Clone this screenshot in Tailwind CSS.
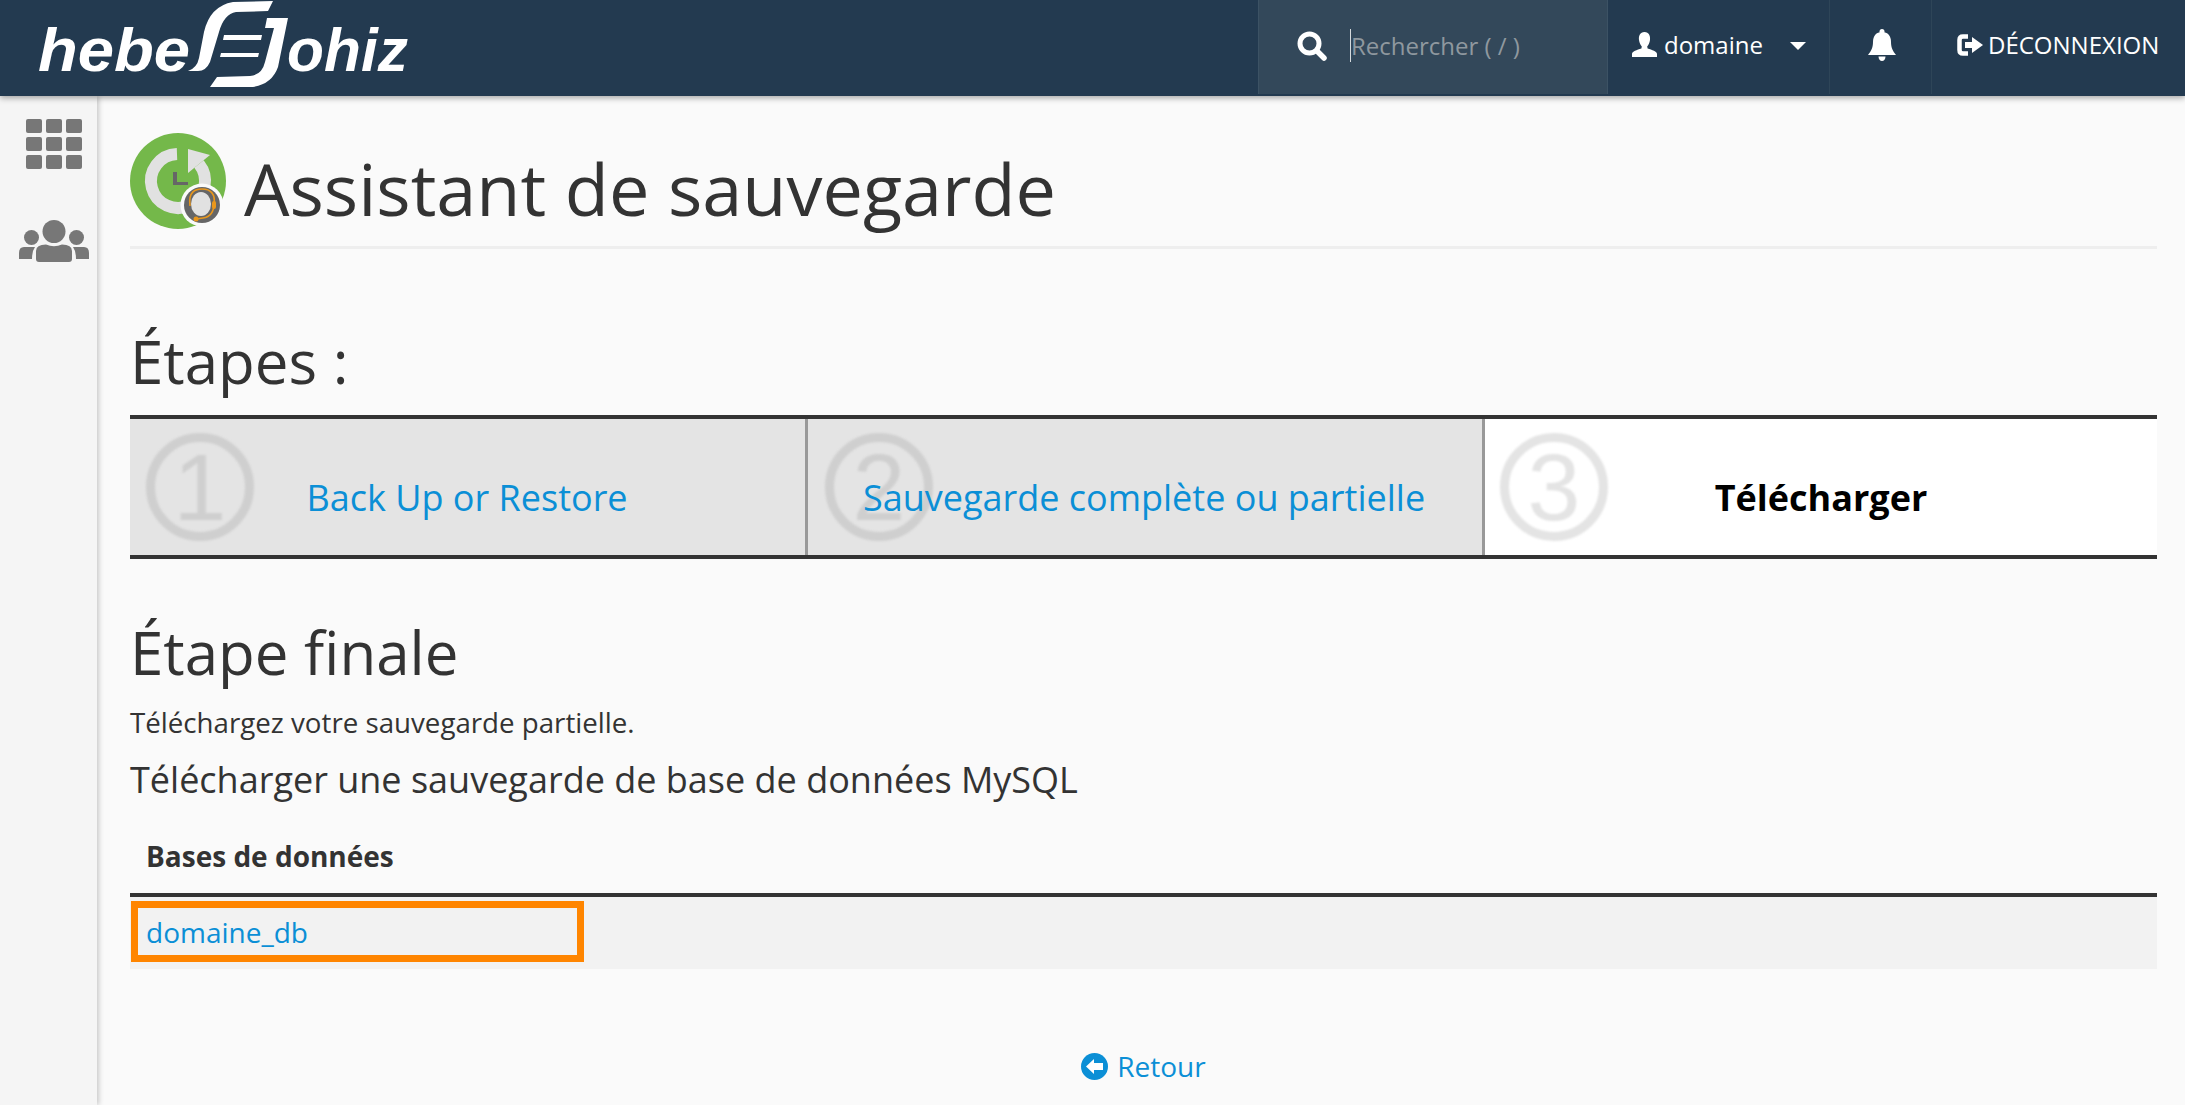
<!DOCTYPE html>
<html lang="fr">

<head>
  <meta charset="UTF-8">
  <meta name="viewport" content="width=device-width, initial-scale=1.0">
  <title>Assistant de sauvegarde</title>
  <script src="https://cdn.jsdelivr.net/npm/@tailwindcss/browser@4"></script>
</head>

<body class="h-[1105px] overflow-hidden bg-[#fafafa] font-['Open_Sans',sans-serif] text-[#333]">
  <!-- Navbar begin -->
  <header class="relative z-10 flex h-[96px] items-start justify-between bg-[#233a50] shadow-[0_2px_6px_rgba(0,0,0,0.35)]">
    <svg class="h-[96px] w-[420px] shrink-0" viewBox="0 0 420 96" fill="#fff">
      <text x="38" y="71" textLength="152" lengthAdjust="spacingAndGlyphs" font-family="Liberation Sans" font-weight="700" font-style="italic" font-size="62">hebe</text>
      <text x="287" y="71" textLength="121" lengthAdjust="spacingAndGlyphs" font-family="Liberation Sans" font-weight="700" font-style="italic" font-size="62">ohiz</text>
      <path d="M273 1 L268 11 L236 12 Q224 14 219 32 L210 62 Q206 71 198 71 L188 71 Q197 68 199 58 L204 32 Q210 6 233 2 Z" />
      <path d="M267 18 L288 18 L278 67 Q272 84 253 87 L210 87 L217 77 L250 76 Q262 75 265 62 L274 28 L265 28 Z" />
      <path d="M224 35 L262 35 L261 40 L223 40 Z" />
      <path d="M221 53 L259 53 L258 57 L220 57 Z" />
    </svg>

    <div class="flex h-[94px] items-stretch text-white">
      <div class="flex w-[350px] items-center border-x border-[#3c5264] bg-[#33485a] pb-[3px] pl-[38px]">
        <svg class="h-[30px] w-[30px] shrink-0" viewBox="0 0 30 30" fill="none" stroke="#fff">
          <circle cx="12.5" cy="12.5" r="9.5" stroke-width="5" />
          <path d="M20 20 L27 27" stroke-width="5.5" stroke-linecap="round" />
        </svg>
        <input type="text" placeholder="Rechercher ( / )"
          class="ml-[23px] h-[33px] w-[240px] border-l border-[#d5dadd] bg-transparent text-[24px] outline-none placeholder:text-[#8f989f]">
      </div>
      <div class="flex w-[222px] items-center border-r border-[#2e4558] pb-[5px] pl-[24px]">
        <svg class="h-[25px] w-[25px] shrink-0" viewBox="0 0 25 25" fill="#fff">
          <path d="M12.5 0 C17 0 18.5 4 18 8 C17.6 11 16.5 13 15.2 14.5 L15.6 16.6 C20 18 25 19.5 25 22 L25 25 L0 25 L0 22 C0 19.5 5 18 9.4 16.6 L9.8 14.5 C8.5 13 7.4 11 7 8 C6.5 4 8 0 12.5 0 Z" />
        </svg>
        <span class="ml-[7px] text-[24px] leading-none">domaine</span>
        <span class="ml-[27px] mt-[3px] h-0 w-0 border-x-[8px] border-t-[8px] border-x-transparent border-t-white"></span>
      </div>
      <div class="flex w-[102px] items-center justify-center border-r border-[#2e4558]">
        <svg class="mb-[4px] ml-[2px] h-[32px] w-[28px]" viewBox="0 0 28 32" fill="#fff">
          <circle cx="14" cy="2.5" r="2.5" />
          <path d="M14 3 C20 3 23 7 23 13 C23 19 25 22 28 26 L0 26 C3 22 5 19 5 13 C5 7 8 3 14 3 Z" />
          <path d="M10.5 27.5 L17.5 27.5 C17.5 30 16 32 14 32 C12 32 10.5 30 10.5 27.5 Z" />
        </svg>
      </div>
      <div class="flex w-[253px] items-center pb-[5px] pl-[25px]">
        <svg class="h-[22px] w-[27px] shrink-0" viewBox="0 0 27 22" fill="none">
          <path d="M11 2.5 L6 2.5 Q2.5 2.5 2.5 6 L2.5 16 Q2.5 19.5 6 19.5 L11 19.5" stroke="#fff" stroke-width="4.5" />
          <path d="M8 8 L15 8 L15 3 L26 11 L15 19 L15 14 L8 14 Z" fill="#fff" />
        </svg>
        <span class="ml-[4px] text-[24px] leading-none">DÉCONNEXION</span>
      </div>
    </div>
  </header>
  <!-- Navbar End -->

  <div class="flex h-[1009px]">
    <aside class="flex w-[97px] shrink-0 flex-col items-center bg-[#f5f5f5] pl-[11px] shadow-[2px_0_5px_rgba(0,0,0,0.2)]">
      <div class="mt-[23px] grid grid-cols-[16px_16px_16px] gap-x-[4px] gap-y-[4px]">
        <span class="h-[14px] rounded-[2px] bg-[#777]"></span>
        <span class="h-[14px] rounded-[2px] bg-[#777]"></span>
        <span class="h-[14px] rounded-[2px] bg-[#777]"></span>
        <span class="h-[14px] rounded-[2px] bg-[#777]"></span>
        <span class="h-[14px] rounded-[2px] bg-[#777]"></span>
        <span class="h-[14px] rounded-[2px] bg-[#777]"></span>
        <span class="h-[14px] rounded-[2px] bg-[#777]"></span>
        <span class="h-[14px] rounded-[2px] bg-[#777]"></span>
        <span class="h-[14px] rounded-[2px] bg-[#777]"></span>
      </div>
      <svg class="mt-[51px] h-[42px] w-[70px] shrink-0" viewBox="0 0 70 42" fill="#777">
        <circle cx="35" cy="11.5" r="11.5" />
        <circle cx="12.5" cy="17.5" r="7.5" />
        <circle cx="57.5" cy="17.5" r="7.5" />
        <path d="M17 31 Q17 24.5 27 24.5 Q35 28 43 24.5 Q53 24.5 53 31 L53 39 Q53 42 50 42 L20 42 Q17 42 17 39 Z" />
        <path d="M13 27 L5 27 Q0 27 0 33 L0 39 L13 39 Q13 31 16 27 Z" />
        <path d="M57 27 L65 27 Q70 27 70 33 L70 39 L57 39 Q57 31 54 27 Z" />
      </svg>
    </aside>

    <main class="flex-1 pl-[33px] pr-[28px]">
      <!-- Title -->
      <div class="flex h-[153px] items-start border-b-[3px] border-[#eee] pt-[37px]">
        <svg class="h-[96px] w-[96px] shrink-0" viewBox="0 0 96 96">
          <circle cx="48" cy="48" r="48" fill="#74b84a" />
          <path d="M47 21 A27 27 0 1 0 69 31" fill="none" stroke="#e1e1e1" stroke-width="12" />
          <path d="M58 16 L80 22 L58 40 Z" fill="#e1e1e1" />
          <path d="M43 39 L47 39 L47 49 L58 49 L58 52 L43 52 Z" fill="#666" />
          <circle cx="72" cy="72" r="21.5" fill="#fafafa" />
          <circle cx="72" cy="72" r="18" fill="#666" />
          <ellipse cx="71" cy="71" rx="10" ry="12" fill="#e1e1e1" />
          <path d="M60 73 C58 58 66 56 72 56 C80 56 86 60 84 73" fill="none" stroke="#e9971c" stroke-width="1.6" />
          <path d="M84 70 C84 80 80 84 73 85 L66 86" fill="none" stroke="#e9971c" stroke-width="1.6" />
          <rect x="82" y="68" width="4" height="8" rx="2" fill="#e9971c" />
          <circle cx="66" cy="86" r="2.5" fill="#e9971c" />
        </svg>
        <h1 class="ml-[18px] mt-[9px] text-[72px] leading-[92px]">Assistant de sauvegarde</h1>
      </div>

      <h2 class="mt-[71px] text-[60px] leading-[82px]">Étapes :</h2>

      <!-- Steps -->
      <div class="mt-[13px] flex h-[144px] border-y-4 border-[#333] text-[36px]">
        <div class="relative flex h-full w-[678px] items-center justify-center overflow-hidden border-r-[3px] border-[#999] bg-[#e4e4e4] pt-[22px] pr-[1px]">
          <div class="absolute left-[16px] top-[14px] flex h-[108px] w-[108px] items-center justify-center rounded-full border-[9px] border-[#cfcfcf] font-['Liberation_Sans',sans-serif] text-[95px] leading-none text-[#cfcfcf] blur-[1px]">1</div>
          <a href="#" class="relative text-[#0b8fd6]">Back Up or Restore</a>
        </div>
        <div class="relative flex h-full w-[677px] items-center justify-center overflow-hidden border-r-[3px] border-[#999] bg-[#e4e4e4] pt-[22px] pr-[2px]">
          <div class="absolute left-[17px] top-[14px] flex h-[108px] w-[108px] items-center justify-center rounded-full border-[9px] border-[#cfcfcf] font-['Liberation_Sans',sans-serif] text-[95px] leading-none text-[#cfcfcf] blur-[1px]">2</div>
          <a href="#" class="relative text-[#0b8fd6]">Sauvegarde complète ou partielle</a>
        </div>
        <div class="relative flex h-full flex-1 items-center justify-center overflow-hidden bg-white pt-[22px]">
          <div class="absolute left-[15px] top-[14px] flex h-[108px] w-[108px] items-center justify-center rounded-full border-[9px] border-[#e4e4e4] font-['Liberation_Sans',sans-serif] text-[95px] leading-none text-[#e4e4e4] blur-[1px]">3</div>
          <span class="relative font-bold text-black">Télécharger</span>
        </div>
      </div>

      <h2 class="mt-[53px] text-[60px] leading-[80px]">Étape finale</h2>
      <p class="mt-[13px] text-[27.7px] leading-[34px]">Téléchargez votre sauvegarde partielle.</p>
      <h3 class="mt-[19px] text-[36px] leading-[44px]">Télécharger une sauvegarde de base de données MySQL</h3>

      <!-- Table -->
      <div class="mt-[32px] flex h-[63px] items-center border-b-4 border-[#333] pb-[16px] pl-[16px] text-[28px] font-bold">Bases de données</div>
      <div class="flex h-[72px] items-start bg-[#f2f2f2] pl-px pt-[4px]">
        <div class="flex h-[61px] w-[453px] items-center border-[7px] border-[#ff8500] pl-[8px] text-[28px]">
          <a href="#" class="text-[#0b8fd6]">domaine_db</a>
        </div>
      </div>

      <!-- Back link -->
      <div class="mt-[78px] flex items-center justify-center">
        <a href="#" class="flex items-center text-[28px] leading-[38px] text-[#0b8fd6]">
          <svg class="mr-[9px] h-[27px] w-[27px]" viewBox="0 0 27 27">
            <circle cx="13.5" cy="13.5" r="13.5" fill="#0b8fd6" />
            <path d="M5 13.5 L13 6 L13 10 L22 10 L22 17 L13 17 L13 21 Z" fill="#fff" />
          </svg>
          Retour
        </a>
      </div>
    </main>
  </div>
</body>

</html>
